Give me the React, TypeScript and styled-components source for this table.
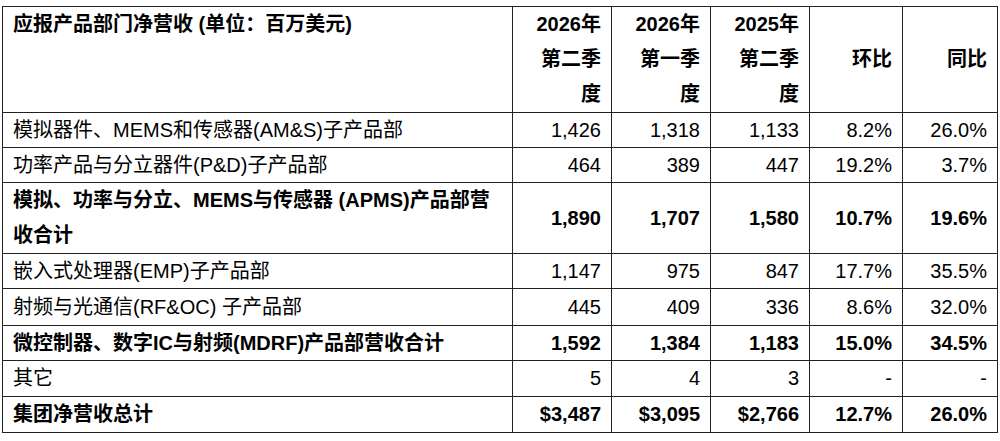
import styled, { createGlobalStyle } from 'styled-components';

const GlobalStyle = createGlobalStyle`
  html, body {
    margin: 0;
    padding: 0;
    background: #fff;
  }
  body {
    font-family: 'Liberation Sans', Arial, 'Noto Sans CJK SC', sans-serif;
    color: #000;
  }
`;

/** 표 바깥 여백 */
const Page = styled.div`
  padding: 6px 0 0 2px;
`;

const Table = styled.table`
  width: 995px;
  border-collapse: collapse;
  table-layout: fixed;
  font-size: 20px;
  border: 1px solid #222;
`;

const HeadCell = styled.th<{ $first?: boolean }>`
  border: 1px solid #222;
  padding: 0 10px;
  line-height: 35px;
  font-weight: bold;
  text-align: ${(p) => (p.$first ? 'left' : 'right')};
  vertical-align: ${(p) => (p.$first ? 'top' : 'middle')};
  white-space: nowrap;
`;

const Cell = styled.td<{ $bold?: boolean; $left?: boolean; $lh: number }>`
  border: 1px solid #222;
  padding: 0 10px;
  line-height: ${(p) => p.$lh}px;
  font-weight: ${(p) => (p.$bold ? 'bold' : 'normal')};
  text-align: ${(p) => (p.$left ? 'left' : 'right')};
  vertical-align: middle;
`;

const widths = [510, 99, 99, 99, 93, 95];

const heads = [
  ['2026年', '第二季', '度'],
  ['2026年', '第一季', '度'],
  ['2025年', '第二季', '度'],
  ['环比'],
  ['同比'],
];

type Row = {
  name: string[];
  values: string[];
  bold?: boolean;
  lh: number;
};

const rows: Row[] = [
  { name: ['模拟器件、MEMS和传感器(AM&S)子产品部'], values: ['1,426', '1,318', '1,133', '8.2%', '26.0%'], lh: 34 },
  { name: ['功率产品与分立器件(P&D)子产品部'], values: ['464', '389', '447', '19.2%', '3.7%'], lh: 34 },
  {
    name: ['模拟、功率与分立、MEMS与传感器 (APMS)产品部营', '收合计'],
    values: ['1,890', '1,707', '1,580', '10.7%', '19.6%'],
    bold: true,
    lh: 35,
  },
  { name: ['嵌入式处理器(EMP)子产品部'], values: ['1,147', '975', '847', '17.7%', '35.5%'], lh: 34 },
  { name: ['射频与光通信(RF&OC) 子产品部'], values: ['445', '409', '336', '8.6%', '32.0%'], lh: 36 },
  {
    name: ['微控制器、数字IC与射频(MDRF)产品部营收合计'],
    values: ['1,592', '1,384', '1,183', '15.0%', '34.5%'],
    bold: true,
    lh: 34,
  },
  { name: ['其它'], values: ['5', '4', '3', '-', '-'], lh: 35 },
  { name: ['集团净营收总计'], values: ['$3,487', '$3,095', '$2,766', '12.7%', '26.0%'], bold: true, lh: 35 },
];

function App() {
  return (
    <Page>
      <GlobalStyle />
      <Table>
        <colgroup>
          {widths.map((w, i) => (
            <col key={i} style={{ width: w }} />
          ))}
        </colgroup>
        <thead>
          <tr>
            <HeadCell $first>应报产品部门净营收 (单位：百万美元)</HeadCell>
            {heads.map((h, i) => (
              <HeadCell key={i}>
                {h.map((line, j) => (
                  <div key={j}>{line}</div>
                ))}
              </HeadCell>
            ))}
          </tr>
        </thead>
        <tbody>
          {rows.map((r, i) => (
            <tr key={i}>
              <Cell $left $bold={r.bold} $lh={r.lh}>
                {r.name.map((line, j) => (
                  <div key={j}>{line}</div>
                ))}
              </Cell>
              {r.values.map((v, j) => (
                <Cell key={j} $bold={r.bold} $lh={r.lh}>
                  {v}
                </Cell>
              ))}
            </tr>
          ))}
        </tbody>
      </Table>
    </Page>
  );
}

export default App;
